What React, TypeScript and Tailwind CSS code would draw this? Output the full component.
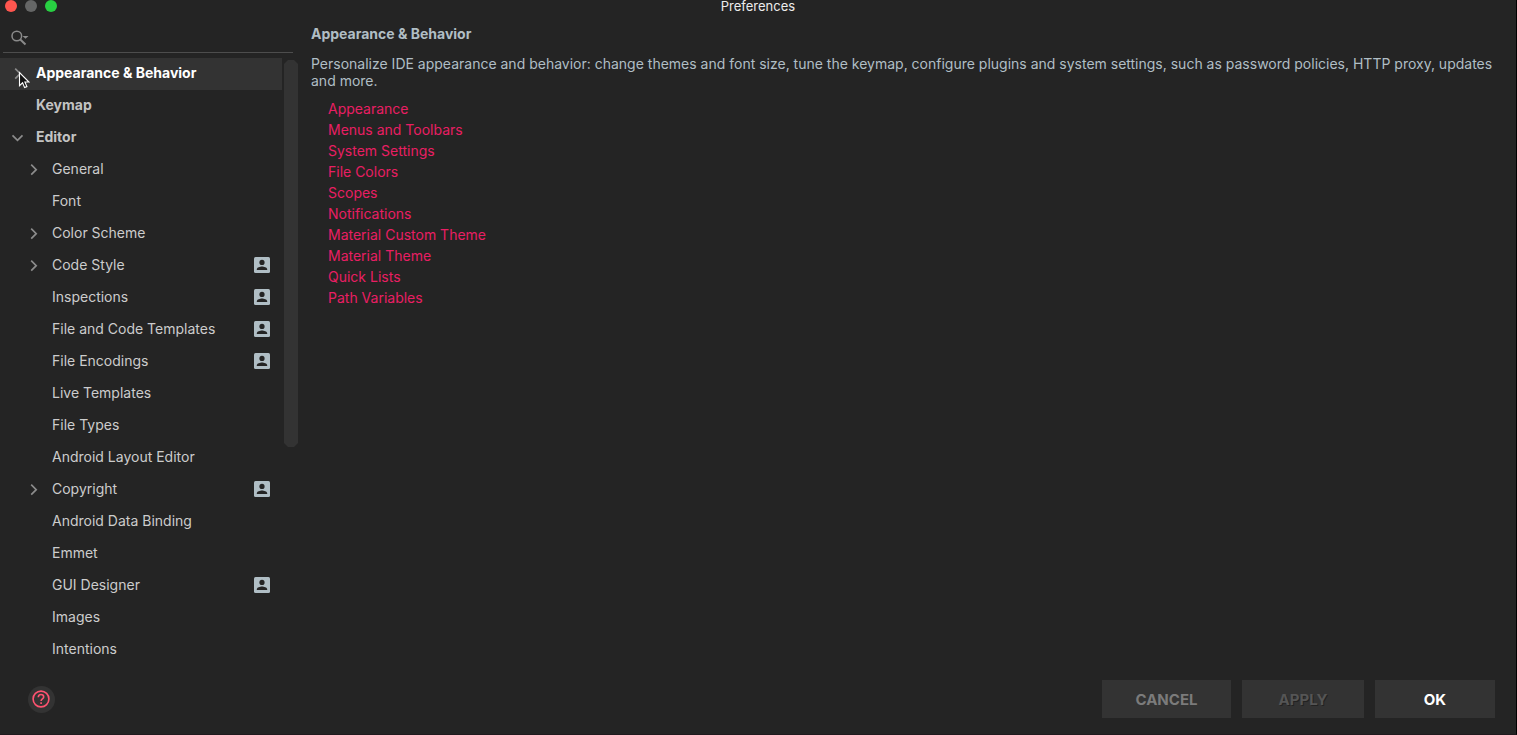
import React from "react";

type TreeItem = {
  label: string;
  depth: 0 | 1;
  state?: "open" | "closed";
  project?: boolean;
  selected?: boolean;
};

const tree: TreeItem[] = [
  { label: "Appearance & Behavior", depth: 0, state: "closed", selected: true },
  { label: "Keymap", depth: 0 },
  { label: "Editor", depth: 0, state: "open" },
  { label: "General", depth: 1, state: "closed" },
  { label: "Font", depth: 1 },
  { label: "Color Scheme", depth: 1, state: "closed" },
  { label: "Code Style", depth: 1, state: "closed", project: true },
  { label: "Inspections", depth: 1, project: true },
  { label: "File and Code Templates", depth: 1, project: true },
  { label: "File Encodings", depth: 1, project: true },
  { label: "Live Templates", depth: 1 },
  { label: "File Types", depth: 1 },
  { label: "Android Layout Editor", depth: 1 },
  { label: "Copyright", depth: 1, state: "closed", project: true },
  { label: "Android Data Binding", depth: 1 },
  { label: "Emmet", depth: 1 },
  { label: "GUI Designer", depth: 1, project: true },
  { label: "Images", depth: 1 },
  { label: "Intentions", depth: 1 },
];

const pages = [
  "Appearance",
  "Menus and Toolbars",
  "System Settings",
  "File Colors",
  "Scopes",
  "Notifications",
  "Material Custom Theme",
  "Material Theme",
  "Quick Lists",
  "Path Variables",
];

function Chevron({ open }: { open: boolean }) {
  return (
    <svg className="size-4" viewBox="0 0 16 16" fill="none" stroke="#8c8c8c" strokeWidth="1.7" aria-hidden="true">
      {open ? <path d="M3.5 6.3 8.5 11.3 13.5 6.3" /> : <path d="M6.2 3.7 11.2 8.7 6.2 13.7" />}
    </svg>
  );
}

function ProjectIcon() {
  return (
    <svg className="size-4" viewBox="0 0 16 16" aria-hidden="true">
      <rect width="16" height="16" rx="1.5" fill="#b0bec5" />
      <circle cx="8" cy="5.4" r="2.6" fill="#242424" />
      <path d="M2.8 13v-.8c0-1.9 3.4-2.8 5.2-2.8s5.2.9 5.2 2.8v.8z" fill="#242424" />
    </svg>
  );
}

function Pointer() {
  return (
    <svg className="pointer-events-none absolute left-[18px] top-[13px] h-5 w-3" viewBox="0 0 12 20" aria-hidden="true">
      <path d="M1.5 1.5v13.2l3.1-2.9 2 4.8 2.3-1-2-4.6h4z" fill="#111" stroke="#fff" strokeWidth="1.1" />
    </svg>
  );
}

function TreeRow({ item }: { item: TreeItem }) {
  const tone = item.selected
    ? "bg-[#333333] font-bold text-white"
    : item.depth === 0
      ? "font-bold text-[#c3c3c3]"
      : "text-[#cccccc]";
  return (
    <li
      role="treeitem"
      aria-selected={!!item.selected}
      aria-expanded={item.state ? item.state === "open" : undefined}
      className={`relative flex h-8 items-center pb-0.5 pr-3 ${item.depth === 0 ? "pl-[9px]" : "pl-[25px]"} ${tone}`}
    >
      <span className="flex w-[27px] shrink-0">{item.state && <Chevron open={item.state === "open"} />}</span>
      <span className="flex-1 whitespace-nowrap">{item.label}</span>
      {item.project && <ProjectIcon />}
      {item.selected && <Pointer />}
    </li>
  );
}

export default function App() {
  return (
    <div className="flex min-h-screen flex-col border-b border-r border-b-[#201a1e] border-r-black bg-[#242424] font-['Inter','Liberation_Sans',sans-serif] text-sm">
      <header className="relative flex h-[13px] items-center justify-center">
        <div className="absolute left-[5px] top-0 flex gap-2">
          <button aria-label="Close" className="size-3 rounded-full bg-[#ff564f]" />
          <button aria-label="Minimize" className="size-3 rounded-full bg-[#656666]" />
          <button aria-label="Zoom" className="size-3 rounded-full bg-[#28cf42]" />
        </div>
        <h1 className="text-[13px] leading-[13px] text-[#ececec]">Preferences</h1>
      </header>

      <div className="flex flex-1">
        <aside className="w-[298px] shrink-0">
          <label className="ml-[3px] mr-[5px] flex h-10 items-center border-b border-[#4d4d4d] pl-2 pt-2.5">
            <svg className="h-4 w-[18px] shrink-0" viewBox="0 0 18 16" fill="none" stroke="#8a8a8a" aria-hidden="true">
              <circle cx="5.8" cy="6" r="4.8" strokeWidth="1.5" />
              <path d="m9.3 9.5 5.2 5" strokeWidth="2" />
              <path d="M11.5 6h6l-3 2.8z" fill="#8a8a8a" stroke="none" />
            </svg>
            <input type="text" aria-label="Search settings" className="min-w-0 flex-1 bg-transparent text-[#c3c3c3] outline-none" />
          </label>
          <div className="flex gap-0.5 pt-[5px]">
            <ul role="tree" aria-label="Settings" className="flex-1">
              {tree.map((item) => (
                <TreeRow key={item.label} item={item} />
              ))}
            </ul>
            <svg className="mt-0.5 h-[387px] w-3.5" viewBox="0 0 14 387" aria-hidden="true">
              <path d="M4 0h6l4 4v379l-4 4H4l-4-4V4z" fill="#333333" />
            </svg>
          </div>
        </aside>

        <main className="flex-1 pl-[13px] pr-5 pt-3 text-[#b0bec5]">
          <h2 className="font-bold leading-[18px]">Appearance &amp; Behavior</h2>
          <p className="mt-3 leading-[17px]">
            Personalize IDE appearance and behavior: change themes and font size, tune the keymap, configure plugins and
            system settings, such as password policies, HTTP proxy, updates and more.
          </p>
          <ul className="mt-[9px] pl-[17px]">
            {pages.map((page) => (
              <li key={page} className="leading-[21px]">
                <a href="#" className="text-[#e91e63]">
                  {page}
                </a>
              </li>
            ))}
          </ul>
        </main>
      </div>

      <footer className="flex items-center justify-between pb-4 pl-7 pr-[21px] text-[15px] font-bold">
        <button aria-label="Help" className="flex size-[27px] items-center justify-center rounded-full bg-[#333333]">
          <svg className="size-[19px]" viewBox="0 0 19 19" fill="none" stroke="#ff5370" strokeWidth="1.6" aria-hidden="true">
            <circle cx="9" cy="9" r="7.9" />
            <path d="M6.3 7.2c0-1.6 1.2-2.7 2.7-2.7s2.7 1.1 2.7 2.5c0 1.8-2.6 2-2.6 4" />
            <path d="M9.1 12.3v1.6" />
          </svg>
        </button>
        <div className="flex gap-[11px]">
          <button className="h-[38px] w-[129px] bg-[#333333] pt-0.5 text-[#7b7b7b]">CANCEL</button>
          <button disabled className="h-[38px] w-[122px] bg-[#333333] pt-0.5 text-[#555555] [text-shadow:1px_1px_0_#222]">
            APPLY
          </button>
          <button className="h-[38px] w-[120px] bg-[#333333] pt-0.5 text-white">OK</button>
        </div>
      </footer>
    </div>
  );
}
